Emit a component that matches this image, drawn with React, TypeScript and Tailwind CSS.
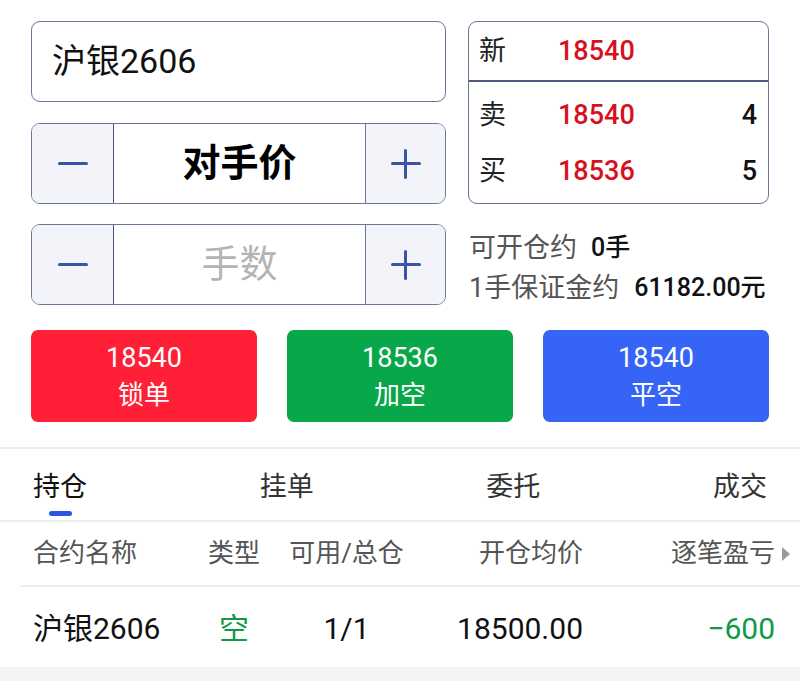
const FONT = { fontFamily: 'Roboto, "Noto Sans CJK SC", sans-serif' };

function Stepper({ label, bold }: { label: string; bold?: boolean }) {
  return (
    <div className="flex h-[81px] rounded-[9px] border border-[#6b7699] overflow-hidden">
      <div className="w-[82px] bg-[#f3f4fa] flex items-center justify-center border-r border-[#4a557a]">
        <div className="w-[30px] h-[3.5px] rounded-full bg-[#3b55a6]" />
      </div>
      <div
        className={
          bold
            ? 'flex-1 flex items-center justify-center text-[38px] font-bold text-black'
            : 'flex-1 flex items-center justify-center text-[38px] text-[#b4b4b4]'
        }
      >
        {label}
      </div>
      <div className="w-[80px] bg-[#f3f4fa] flex items-center justify-center border-l border-[#6b7699]">
        <div className="relative w-[30px] h-[30px]">
          <div className="absolute left-0 top-[13px] w-[30px] h-[3.5px] rounded-full bg-[#3b55a6]" />
          <div className="absolute top-0 left-[13px] h-[30px] w-[3.5px] rounded-full bg-[#3b55a6]" />
        </div>
      </div>
    </div>
  );
}

function ActionButton({ price, label, color }: { price: string; label: string; color: string }) {
  return (
    <div className={`w-[226px] h-[92px] rounded-[7px] flex flex-col items-center justify-center text-white ${color}`}>
      <div className="text-[27px] leading-[34px] mt-[1px]">{price}</div>
      <div className="text-[26px] leading-[36px] mt-[2px]">{label}</div>
    </div>
  );
}

export default function App() {
  return (
    <div className="w-[800px] h-[681px] bg-white overflow-hidden flex flex-col" style={FONT}>
      <div className="flex px-[31px] mt-[21px] h-[284px] gap-[22px]">
        <div className="w-[415px] flex flex-col">
          <div className="h-[81px] rounded-[9px] border border-[#6b7699] flex items-center pl-[20px] text-[34px] text-[#111]">
            沪银2606
          </div>
          <div className="mt-[21px]">
            <Stepper label="对手价" bold />
          </div>
          <div className="mt-[20px]">
            <Stepper label="手数" />
          </div>
        </div>
        <div className="flex-1 flex flex-col">
          <div className="h-[183px] shrink-0 rounded-[9px] border border-[#6b7699] flex flex-col">
            <div className="h-[60px] flex items-center pl-[10px] border-b-2 border-[#4f5b85]">
              <span className="w-[79px] text-[27px] text-[#222]">新</span>
              <span className="text-[27px] font-medium text-[#d7101d]">18540</span>
            </div>
            <div className="flex items-center h-[58px] mt-[4px] pl-[10px] pr-[11px]">
              <span className="w-[79px] text-[27px] text-[#222]">卖</span>
              <span className="flex-1 text-[27px] font-medium text-[#d7101d]">18540</span>
              <span className="text-[27px] font-medium text-[#111]">4</span>
            </div>
            <div className="flex items-center h-[54px] pl-[10px] pr-[11px]">
              <span className="w-[79px] text-[27px] text-[#222]">买</span>
              <span className="flex-1 text-[27px] font-medium text-[#d7101d]">18536</span>
              <span className="text-[27px] font-medium text-[#111]">5</span>
            </div>
          </div>
          <div className="mt-[25px] pl-[1px] flex items-center h-[38px] shrink-0">
            <span className="text-[27px] text-[#555]">可开仓约</span>
            <span className="ml-[14px] text-[25px] text-[#111] font-medium">0手</span>
          </div>
          <div className="pl-[1px] flex items-center h-[42px] shrink-0">
            <span className="text-[27px] text-[#555]">1手保证金约</span>
            <span className="ml-[15px] text-[25px] text-[#111] font-medium">61182.00元</span>
          </div>
        </div>
      </div>

      <div className="flex justify-between px-[31px] mt-[25px]">
        <ActionButton price="18540" label="锁单" color="bg-[#ff1f36]" />
        <ActionButton price="18536" label="加空" color="bg-[#07a74a]" />
        <ActionButton price="18540" label="平空" color="bg-[#3664f6]" />
      </div>

      <div className="mt-[25px] h-[2px] bg-[#eeeeee]" />

      <div className="h-[71px] flex justify-between items-start px-[33px] pt-[20px] text-[27px] text-[#333]">
        <div className="flex flex-col items-center">
          <span className="leading-[36px] text-[#111]">持仓</span>
          <div className="mt-[6px] w-[23px] h-[5px] rounded-full bg-[#2a55e0]" />
        </div>
        <span className="leading-[36px]">挂单</span>
        <span className="leading-[36px]">委托</span>
        <span className="leading-[36px]">成交</span>
      </div>

      <div className="h-[2px] bg-[#eeeeee]" />

      <div className="h-[63px] flex items-center pl-[33px] text-[26px] text-[#555]">
        <span className="w-[166px]">合约名称</span>
        <span className="w-[70px] text-center">类型</span>
        <span className="w-[155px] text-center">可用/总仓</span>
        <span className="w-[159px] text-right">开仓均价</span>
        <span className="w-[192px] text-right">逐笔盈亏</span>
        <svg width="10" height="16" viewBox="0 0 10 16" className="ml-[6px]">
          <polygon points="1,1 9,8 1,15" fill="#9a9a9a" />
        </svg>
      </div>

      <div className="ml-[20px] h-[2px] bg-[#eeeeee]" />

      <div className="h-[80px] flex items-center pl-[33px] pt-[2px] text-[30px] text-[#111]">
        <span className="w-[166px]">沪银2606</span>
        <span className="w-[70px] text-center text-[#0f9a48]">空</span>
        <span className="w-[155px] text-center">1/1</span>
        <span className="w-[159px] text-right">18500.00</span>
        <span className="w-[192px] text-right text-[#0f9a48]">−600</span>
      </div>

      <div className="flex-1 bg-[#f4f4f4]" />
    </div>
  );
}
